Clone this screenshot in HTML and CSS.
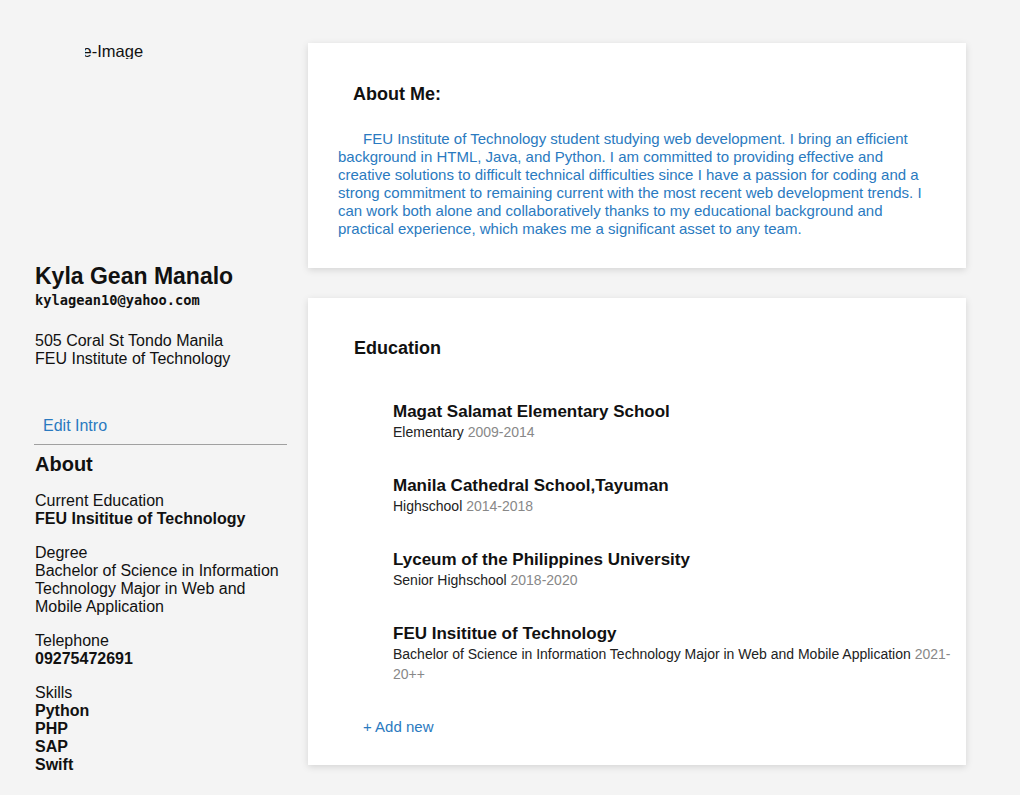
FILE: index.html
```html
<!DOCTYPE html>
<html lang="en">
<head>
<meta charset="utf-8">
<title>Kyla Gean Manalo</title>
<link rel="stylesheet" href="styles.css">
</head>
<body>
<div class="page">
  <aside class="side">
    <div class="avatar"><div class="avatar-alt">Profile-Image</div></div>
    <h1 class="name">Kyla Gean Manalo</h1>
    <div class="email">kylagean10@yahoo.com</div>
    <p class="address">505 Coral St Tondo Manila<br>FEU Institute of Technology</p>
    <div class="edit"><a class="link" href="#">Edit Intro</a></div>
    <h2 class="about-title">About</h2>
    <p class="info">Current Education<br><b>FEU Insititue of Technology</b></p>
    <p class="info">Degree<br>Bachelor of Science in Information Technology Major in Web and Mobile Application</p>
    <p class="info">Telephone<br><b>09275472691</b></p>
    <p class="info">Skills<br><b>Python</b><br><b>PHP</b><br><b>SAP</b><br><b>Swift</b></p>
  </aside>
  <main class="main">
    <section class="card card-about">
      <h3 class="card-title">About Me:</h3>
      <p class="bio">FEU Institute of Technology student studying web development. I bring an efficient background in HTML, Java, and Python. I am committed to providing effective and creative solutions to difficult technical difficulties since I have a passion for coding and a strong commitment to remaining current with the most recent web development trends. I can work both alone and collaboratively thanks to my educational background and practical experience, which makes me a significant asset to any team.</p>
    </section>
    <section class="card card-edu">
      <h3 class="card-title edu-title">Education</h3>
      <ul class="edu-list">
        <li class="edu-item">
          <div class="school">Magat Salamat Elementary School</div>
          <div class="level">Elementary <span class="years">2009-2014</span></div>
        </li>
        <li class="edu-item">
          <div class="school">Manila Cathedral School,Tayuman</div>
          <div class="level">Highschool <span class="years">2014-2018</span></div>
        </li>
        <li class="edu-item">
          <div class="school">Lyceum of the Philippines University</div>
          <div class="level">Senior Highschool <span class="years">2018-2020</span></div>
        </li>
        <li class="edu-item">
          <div class="school">FEU Insititue of Technology</div>
          <div class="level">Bachelor of Science in Information Technology Major in Web and Mobile Application <span class="years">2021-20++</span></div>
        </li>
      </ul>
      <a class="link add" href="#">+ Add new</a>
    </section>
  </main>
</div>
</body>
</html>
```

FILE: styles.css
```css
* { box-sizing: border-box; }
html, body { margin: 0; padding: 0; }
body {
  background: #f4f4f4;
  font-family: "Liberation Sans", Arial, sans-serif;
  color: #111;
  font-size: 16px;
}
.page {
  display: flex;
  align-items: flex-start;
  padding: 43px 0 0 35px;
  gap: 22px;
}
.side {
  width: 251px;
  flex: none;
}
.avatar {
  height: 219px;
  padding-top: 0;
}
.avatar-alt {
  margin-left: 50px;
  width: 70px;
  overflow: hidden;
  white-space: nowrap;
  text-indent: -40px;
  line-height: 16px;
  font-size: 16.5px;
  color: #111;
}
.name {
  margin: 0;
  font-size: 23px;
  line-height: 28px;
  font-weight: bold;
}
.email {
  font-family: "DejaVu Sans Mono", "Liberation Mono", monospace;
  font-weight: bold;
  font-size: 13.7px;
  line-height: 16px;
  margin-top: 2px;
}
.address {
  margin: 24px 0 0;
  line-height: 18px;
}
.edit {
  margin-top: 49px;
  padding: 0 0 9px 9px;
  border-bottom: 1px solid #a0a0a0;
  line-height: 18px;
  margin-left: -1px;
  margin-right: -1px;
}
.link {
  color: #2a7ac0;
  text-decoration: none;
}
.about-title {
  margin: 7px 0 0;
  font-size: 20px;
  line-height: 24px;
  font-weight: bold;
}
.info {
  margin: 16px 0;
  line-height: 18px;
}
.main {
  width: 658px;
  flex: none;
  display: flex;
  flex-direction: column;
  gap: 30px;
}
.card {
  background: #fff;
  box-shadow: 0 2px 7px rgba(0, 0, 0, 0.13);
}
.card-about {
  padding: 40px 44px 30px 30px;
}
.card-title {
  margin: 0;
  font-size: 18px;
  line-height: 22px;
  font-weight: bold;
}
.card-about .card-title {
  padding-left: 15px;
}
.bio {
  margin: 25px 0 0;
  color: #2a7ac0;
  font-size: 15px;
  line-height: 18px;
  text-indent: 25px;
}
.card-edu {
  padding: 39px 14px 29px 45px;
}
.edu-title {
  padding-left: 1px;
}
.edu-list {
  list-style: none;
  margin: 43px 0 0;
  padding: 0 0 0 40px;
}
.edu-item + .edu-item {
  margin-top: 34px;
}
.school {
  font-size: 17px;
  font-weight: bold;
  line-height: 20px;
}
.level {
  font-size: 14px;
  line-height: 20px;
  color: #222;
}
.years {
  color: #888;
}
.add {
  display: inline-block;
  margin: 34px 0 0 10px;
  font-size: 15px;
  line-height: 18px;
}
```
